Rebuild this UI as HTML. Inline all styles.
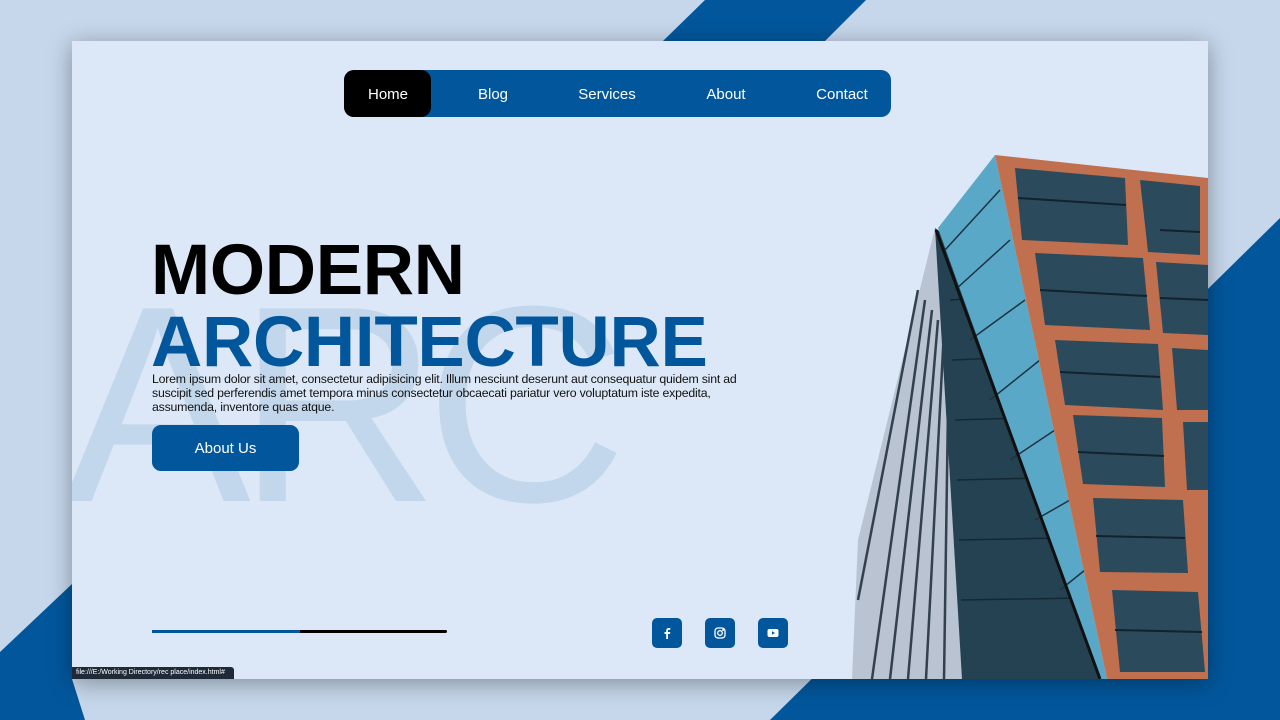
<!DOCTYPE html>
<html><head><meta charset="utf-8"><style>
*{margin:0;padding:0;box-sizing:border-box}
body{width:1280px;height:720px;overflow:hidden;background:#c6d7eb;font-family:"Liberation Sans",Arial,sans-serif;position:relative}
.bg{position:absolute;left:0;top:0}
.card{position:absolute;left:72px;top:41px;width:1136px;height:638px;background:#dce8f7;overflow:hidden;box-shadow:0 4px 22px rgba(0,0,0,.35)}
.wm{position:absolute;left:-8px;top:224px;font-size:280px;color:#c3d7ec;letter-spacing:-14px;line-height:1;white-space:nowrap}
nav{position:absolute;left:272px;top:29px;width:547px;height:47px;background:#02579c;border-radius:10px;color:#fff;font-size:15px}
nav span{position:absolute;top:16px;transform:translateX(-50%)}
nav .home{position:absolute;left:0;top:0;width:87px;height:47px;background:#000;border-radius:10px}
h1{position:absolute;left:79px;top:194px;font-size:71px;line-height:72px;font-weight:bold;color:#000;letter-spacing:-.3px}
h1 b{color:#02579c;display:block}
p{position:absolute;left:80px;top:331px;width:600px;font-size:12.3px;line-height:14px;color:#111;letter-spacing:-.2px}
.btn{position:absolute;left:80px;top:384px;width:147px;height:46px;background:#02579c;border-radius:9px;color:#fff;font-size:15px;text-align:center;line-height:48px}
.bar{position:absolute;left:80px;top:589px;height:3px;width:295px;background:#000;border-radius:2px}
.bar i{display:block;width:148px;height:3px;background:#02579c}
.soc{position:absolute;top:577px;width:30px;height:30px;background:#02579c;border-radius:5px}
.soc svg{position:absolute;left:7px;top:7px}
.status{position:absolute;left:72px;top:667px;width:162px;height:12px;background:#1e2a38;color:#fff;font-size:7px;line-height:12px;padding-left:4px;border-radius:0 3px 0 0}
</style></head><body>
<svg class="bg" width="1280" height="720">
<polygon points="663,41 705,0 866,0 825,41" fill="#02579c"/>
<polygon points="1280,218 1280,720 770,720" fill="#02579c"/>
<polygon points="0,652 72,584 72,679 85,720 0,720" fill="#02579c"/>
</svg>
<div class="card">
<div class="wm">ARC</div>
<svg style="position:absolute;left:778px;top:112px" width="358" height="526" viewBox="850 153 358 526">
<polygon points="935,228 858,540 852,679 962,679 952,240" fill="#b9c3d2"/>
<g stroke="#33404e" stroke-width="2.5">
<line x1="918" y1="290" x2="858" y2="600"/><line x1="925" y1="300" x2="872" y2="679"/><line x1="932" y1="310" x2="890" y2="679"/><line x1="938" y1="320" x2="908" y2="679"/><line x1="944" y1="330" x2="926" y2="679"/><line x1="949" y1="340" x2="944" y2="679"/>
</g>
<polygon points="935,228 952,240 1100,679 962,679" fill="#244252"/>
<g stroke="#142834" stroke-width="1.5">
<line x1="950" y1="300" x2="980" y2="298"/><line x1="952" y1="360" x2="1000" y2="358"/><line x1="955" y1="420" x2="1020" y2="418"/><line x1="957" y1="480" x2="1040" y2="478"/><line x1="959" y1="540" x2="1060" y2="538"/><line x1="961" y1="600" x2="1080" y2="598"/>
</g>
<polygon points="938,228 995,155 1107,679 1100,679" fill="#5aa8c8"/>
<g stroke="#1e3340" stroke-width="1.5">
<line x1="945" y1="250" x2="1000" y2="190"/><line x1="955" y1="290" x2="1010" y2="240"/><line x1="970" y1="340" x2="1025" y2="300"/><line x1="990" y1="400" x2="1040" y2="360"/><line x1="1010" y1="460" x2="1055" y2="430"/><line x1="1035" y1="520" x2="1070" y2="500"/><line x1="1060" y1="590" x2="1085" y2="570"/>
</g>
<line x1="936" y1="230" x2="1100" y2="679" stroke="#111" stroke-width="3"/>
<polygon points="995,155 1208,178 1208,679 1107,679" fill="#c0704f"/>
<g fill="#2b4b5c">
<polygon points="1015,168 1125,178 1128,245 1022,240"/><polygon points="1140,180 1200,186 1200,255 1148,252"/>
<polygon points="1035,253 1143,258 1150,330 1045,325"/><polygon points="1156,262 1208,265 1208,335 1163,333"/>
<polygon points="1055,340 1158,344 1163,410 1065,405"/><polygon points="1172,348 1208,350 1208,410 1177,410"/>
<polygon points="1073,415 1162,418 1165,487 1083,484"/><polygon points="1183,422 1208,422 1208,490 1187,490"/>
<polygon points="1093,498 1183,500 1188,573 1100,572"/>
<polygon points="1112,590 1198,592 1205,672 1120,672"/>
</g>
<g stroke="#13222c" stroke-width="2">
<line x1="1018" y1="198" x2="1126" y2="205"/><line x1="1040" y1="290" x2="1147" y2="296"/><line x1="1060" y1="372" x2="1160" y2="377"/><line x1="1078" y1="452" x2="1164" y2="456"/><line x1="1096" y1="536" x2="1185" y2="538"/><line x1="1115" y1="630" x2="1202" y2="632"/>
<line x1="1160" y1="230" x2="1200" y2="232"/><line x1="1160" y1="298" x2="1208" y2="300"/>
</g>
</svg>
<nav><div class="home"></div>
<span style="left:44px">Home</span><span style="left:149px">Blog</span><span style="left:263px">Services</span><span style="left:382px">About</span><span style="left:498px">Contact</span></nav>
<h1>MODERN<b>ARCHITECTURE</b></h1>
<p>Lorem ipsum dolor sit amet, consectetur adipisicing elit. Illum nesciunt deserunt aut consequatur quidem sint ad suscipit sed perferendis amet tempora minus consectetur obcaecati pariatur vero voluptatum iste expedita, assumenda, inventore quas atque.</p>
<div class="btn">About Us</div>
<div class="bar"><i></i></div>
<div class="soc" style="left:580px"><svg width="16" height="16" viewBox="0 0 16 16"><path d="M9 14V9h2l.3-2H9V5.8c0-.6.2-1 1-1h1.3V3.1C11 3 10.4 3 9.8 3 8.2 3 7.2 4 7.2 5.6V7H5.5v2h1.7v5z" fill="#fff"/></svg></div>
<div class="soc" style="left:633px"><svg width="16" height="16" viewBox="0 0 16 16" fill="none" stroke="#fff" stroke-width="1.3"><rect x="3" y="3" width="10" height="10" rx="3"/><circle cx="8" cy="8" r="2.3"/><circle cx="11" cy="5" r=".4" fill="#fff"/></svg></div>
<div class="soc" style="left:686px"><svg width="16" height="16" viewBox="0 0 16 16"><rect x="2.5" y="4" width="11" height="8" rx="2" fill="#fff"/><path d="M7 6.2v3.6L10 8z" fill="#02579c"/></svg></div>
</div>
<div class="status">file:///E:/Working Directory/rec place/index.html#</div>
</body></html>
